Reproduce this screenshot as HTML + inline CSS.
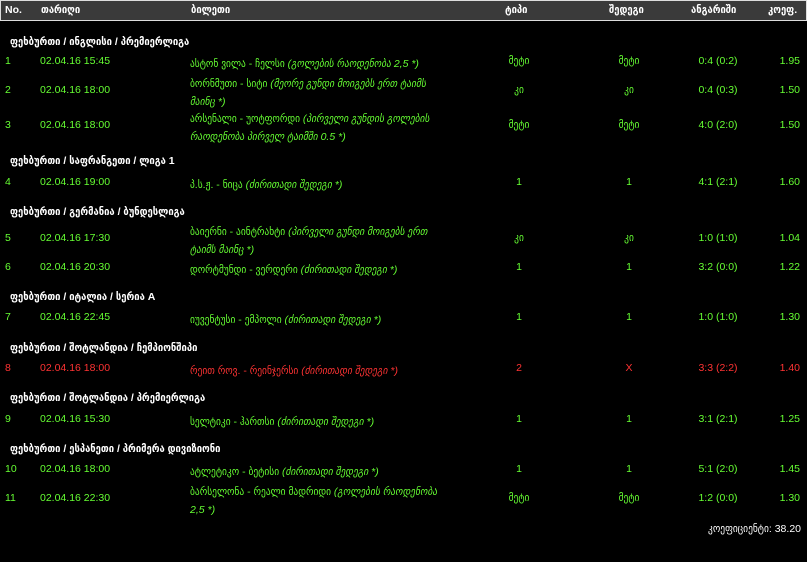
<!DOCTYPE html>
<html><head><meta charset="utf-8"><style>
body{margin:0;width:807px;height:562px;background:#000;overflow:hidden;font-family:"Liberation Sans","DejaVu Sans Condensed",sans-serif;font-size:10.5px;color:#66ff33;position:relative}
.hd{position:absolute;left:0;top:0;width:805px;height:19px;background:#3a3a3a;border:1px solid #ddd;color:#fff;font-weight:bold}
.hd span{position:absolute;top:3px}
.a{position:absolute;white-space:nowrap}
.c{position:absolute;color:#fff;left:10px;font-weight:bold}
i{font-style:italic}
.r{color:#ff3333}
</style></head><body>
<div class="hd"><span style="left:4px">No.</span><span style="left:40px">თარიღი</span><span style="left:190px">ბილეთი</span><span style="left:504px">ტიპი</span><span style="left:608px">შედეგი</span><span style="left:690px">ანგარიში</span><span style="left:767px">კოეფ.</span></div>
<div id="rows"></div>
<script>
const R=[
['c',36,'ფეხბურთი / ინგლისი / პრემიერლიგა'],
['r',55,'1','02.04.16 15:45','ასტონ ვილა - ჩელსი <i>(გოლების რაოდენობა 2,5 *)</i>','მეტი','მეტი','0:4 (0:2)','1.95'],
['r',84,'2','02.04.16 18:00','ბორნმუთი - სიტი <i>(მეორე გუნდი მოიგებს ერთ ტაიმს<br>მაინც *)</i>','კი','კი','0:4 (0:3)','1.50'],
['r',119,'3','02.04.16 18:00','არსენალი - უოტფორდი <i>(პირველი გუნდის გოლების<br>რაოდენობა პირველ ტაიმში 0.5 *)</i>','მეტი','მეტი','4:0 (2:0)','1.50'],
['c',155,'ფეხბურთი / საფრანგეთი / ლიგა 1'],
['r',176,'4','02.04.16 19:00','პ.ს.ჟ. - ნიცა <i>(ძირითადი შედეგი *)</i>','1','1','4:1 (2:1)','1.60'],
['c',206,'ფეხბურთი / გერმანია / ბუნდესლიგა'],
['r',232,'5','02.04.16 17:30','ბაიერნი - აინტრახტი <i>(პირველი გუნდი მოიგებს ერთ<br>ტაიმს მაინც *)</i>','კი','კი','1:0 (1:0)','1.04'],
['r',261,'6','02.04.16 20:30','დორტმუნდი - ვერდერი <i>(ძირითადი შედეგი *)</i>','1','1','3:2 (0:0)','1.22'],
['c',291,'ფეხბურთი / იტალია / სერია A'],
['r',311,'7','02.04.16 22:45','იუვენტუსი - ემპოლი <i>(ძირითადი შედეგი *)</i>','1','1','1:0 (1:0)','1.30'],
['c',342,'ფეხბურთი / შოტლანდია / ჩემპიონშიპი'],
['x',362,'8','02.04.16 18:00','რეით როვ. - რეინჯერსი <i>(ძირითადი შედეგი *)</i>','2','X','3:3 (2:2)','1.40'],
['c',392,'ფეხბურთი / შოტლანდია / პრემიერლიგა'],
['r',413,'9','02.04.16 15:30','სელტიკი - ჰართსი <i>(ძირითადი შედეგი *)</i>','1','1','3:1 (2:1)','1.25'],
['c',443,'ფეხბურთი / ესპანეთი / პრიმერა დივიზიონი'],
['r',463,'10','02.04.16 18:00','ატლეტიკო - ბეტისი <i>(ძირითადი შედეგი *)</i>','1','1','5:1 (2:0)','1.45'],
['r',492,'11','02.04.16 22:30','ბარსელონა - რეალი მადრიდი <i>(გოლების რაოდენობა<br>2,5 *)</i>','მეტი','მეტი','1:2 (0:0)','1.30']];
let h='';
for(const r of R){
 if(r[0]=='c'){h+=`<div class="c" style="top:${r[1]}px">${r[2]}</div>`;continue}
 const cl=r[0]=='x'?' r':'';const two=r[4].includes('<br>');
 const bt=two?r[1]-9:r[1];
 h+=`<div class="a${cl}" style="left:5px;top:${r[1]}px">${r[2]}</div>
<div class="a${cl}" style="left:40px;top:${r[1]}px">${r[3]}</div>
<div class="a${cl}" style="left:190px;top:${bt}px;line-height:18px">${r[4]}</div>
<div class="a${cl}" style="left:469px;width:100px;text-align:center;top:${r[1]}px">${r[5]}</div>
<div class="a${cl}" style="left:579px;width:100px;text-align:center;top:${r[1]}px">${r[6]}</div>
<div class="a${cl}" style="left:668px;width:100px;text-align:center;top:${r[1]}px">${r[7]}</div>
<div class="a${cl}" style="left:700px;width:100px;text-align:right;top:${r[1]}px">${r[8]}</div>`;
}
h+=`<div class="a" style="left:600px;width:201px;text-align:right;top:523px;color:#fff">კოეფიციენტი: 38.20</div>`;
document.getElementById('rows').innerHTML=h;
</script>
</body></html>
